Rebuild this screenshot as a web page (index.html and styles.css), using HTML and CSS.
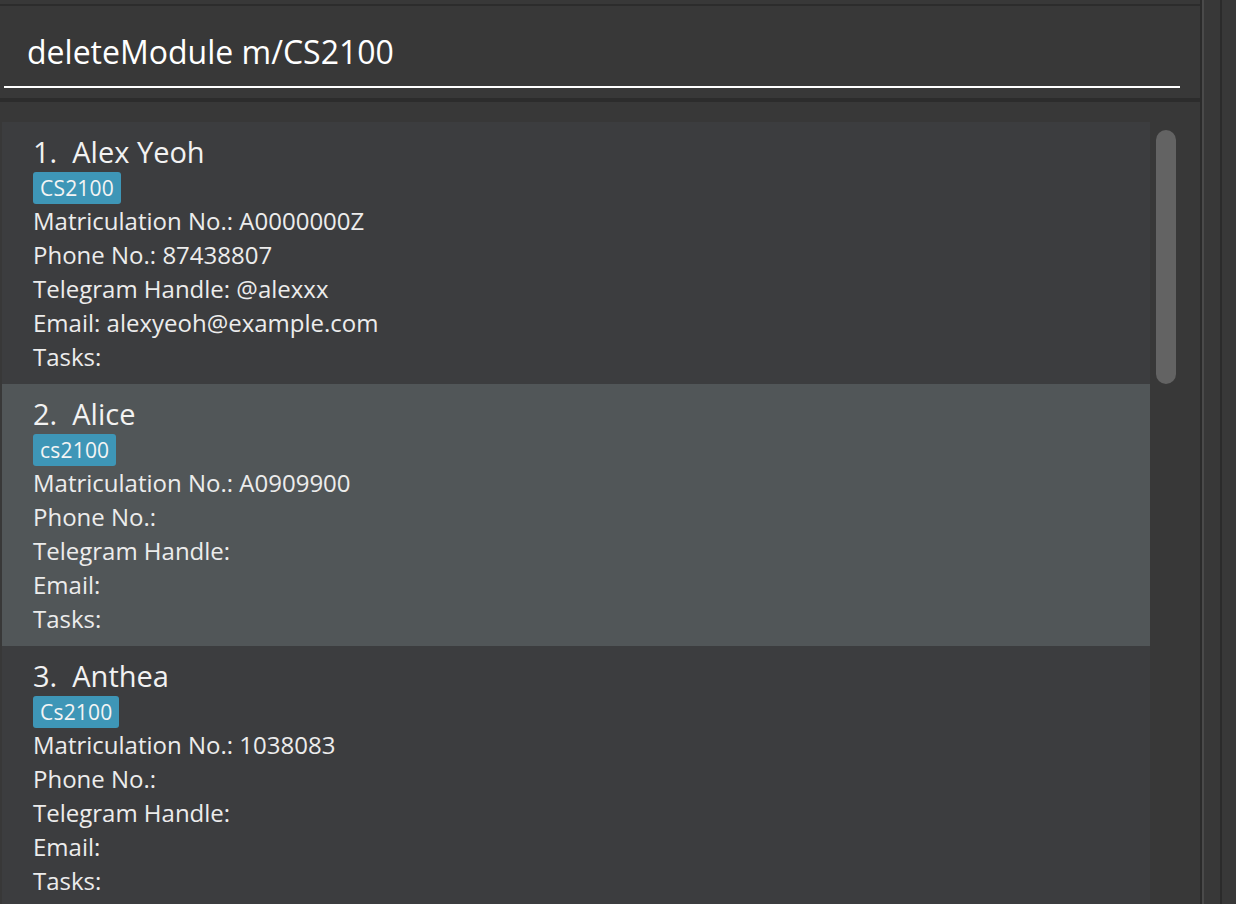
FILE: index.html
```html
<!DOCTYPE html>
<html>
<head>
<meta charset="utf-8">
<link rel="stylesheet" href="styles.css">
</head>
<body>
<div class="app">
  <div class="main">
    <div class="top-gap"></div>
    <div class="command-box">
      <div class="command-text">deleteModule m/CS2100</div>
      <div class="command-line"></div>
    </div>
    <div class="list-panel">
      <div class="list">
        <div class="cell">
          <div class="name">1.&nbsp;&nbsp;Alex Yeoh</div>
          <div class="tags"><span class="tag">CS2100</span></div>
          <div class="detail">Matriculation No.: A0000000Z</div>
          <div class="detail">Phone No.: 87438807</div>
          <div class="detail">Telegram Handle: @alexxx</div>
          <div class="detail">Email: alexyeoh@example.com</div>
          <div class="detail">Tasks:</div>
        </div>
        <div class="cell selected">
          <div class="name">2.&nbsp;&nbsp;Alice</div>
          <div class="tags"><span class="tag">cs2100</span></div>
          <div class="detail">Matriculation No.: A0909900</div>
          <div class="detail">Phone No.:</div>
          <div class="detail">Telegram Handle:</div>
          <div class="detail">Email:</div>
          <div class="detail">Tasks:</div>
        </div>
        <div class="cell">
          <div class="name">3.&nbsp;&nbsp;Anthea</div>
          <div class="tags"><span class="tag">Cs2100</span></div>
          <div class="detail">Matriculation No.: 1038083</div>
          <div class="detail">Phone No.:</div>
          <div class="detail">Telegram Handle:</div>
          <div class="detail">Email:</div>
          <div class="detail">Tasks:</div>
        </div>
      </div>
      <div class="scroll-track"><div class="scroll-thumb"></div></div>
    </div>
  </div>
  <div class="divider"></div>
  <div class="side"></div>
</div>
</body>
</html>
```

FILE: styles.css
```css
html, body {
  margin: 0;
  padding: 0;
  background: #383838;
  font-family: "Open Sans", "Noto Sans", sans-serif;
  overflow: hidden;
}

.app {
  display: flex;
  width: 1236px;
  height: 904px;
}

.main {
  width: 1200px;
  display: flex;
  flex-direction: column;
  flex: none;
}

.top-gap {
  height: 4px;
  border-bottom: 2px solid #2c2c2c;
}

.command-box {
  height: 92px;
  padding-left: 4px;
  padding-right: 20px;
  display: flex;
  flex-direction: column;
  border-bottom: 4px solid #2c2c2c;
  box-sizing: content-box;
}

.command-text {
  color: #ffffff;
  font-size: 32px;
  line-height: 40px;
  padding-top: 26px;
  padding-left: 23px;
  height: 49px;
  box-sizing: border-box;
  white-space: nowrap;
}

.command-line {
  margin-top: 31px;
  height: 2px;
  background: #ffffff;
}

.list-panel {
  flex: 1;
  display: flex;
  padding-top: 20px;
  padding-left: 2px;
  overflow: hidden;
}

.list {
  width: 1148px;
  display: flex;
  flex-direction: column;
}

.cell {
  background: #3c3d3f;
  height: 262px;
  box-sizing: border-box;
  padding: 10px 0 10px 31px;
  color: #ececec;
  flex: none;
}

.cell.selected {
  background: #515658;
}

.name {
  font-size: 29px;
  line-height: 40px;
  height: 40px;
  color: #f2f2f2;
}

.tags {
  height: 32px;
  display: flex;
  align-items: center;
}

.tag {
  display: inline-block;
  background: #3e96b7;
  color: #f4f4f4;
  font-size: 21px;
  line-height: 32px;
  height: 32px;
  padding: 0 7px;
  border-radius: 3px;
  letter-spacing: 0.2px;
}

.detail {
  font-size: 24px;
  line-height: 34px;
  height: 34px;
}

.scroll-track {
  width: 50px;
  padding-top: 8px;
  padding-left: 6px;
  box-sizing: border-box;
}

.scroll-thumb {
  width: 20px;
  height: 254px;
  border-radius: 10px;
  background: #636363;
}

.divider {
  width: 20px;
  flex: none;
  border-left: 2px solid #2b2b2b;
  box-sizing: border-box;
  display: flex;
}

.divider::before {
  content: "";
  width: 2px;
  background: #4a4a4a;
}

.side {
  flex: 1;
  border-left: 2px solid #2b2b2b;
}
```
